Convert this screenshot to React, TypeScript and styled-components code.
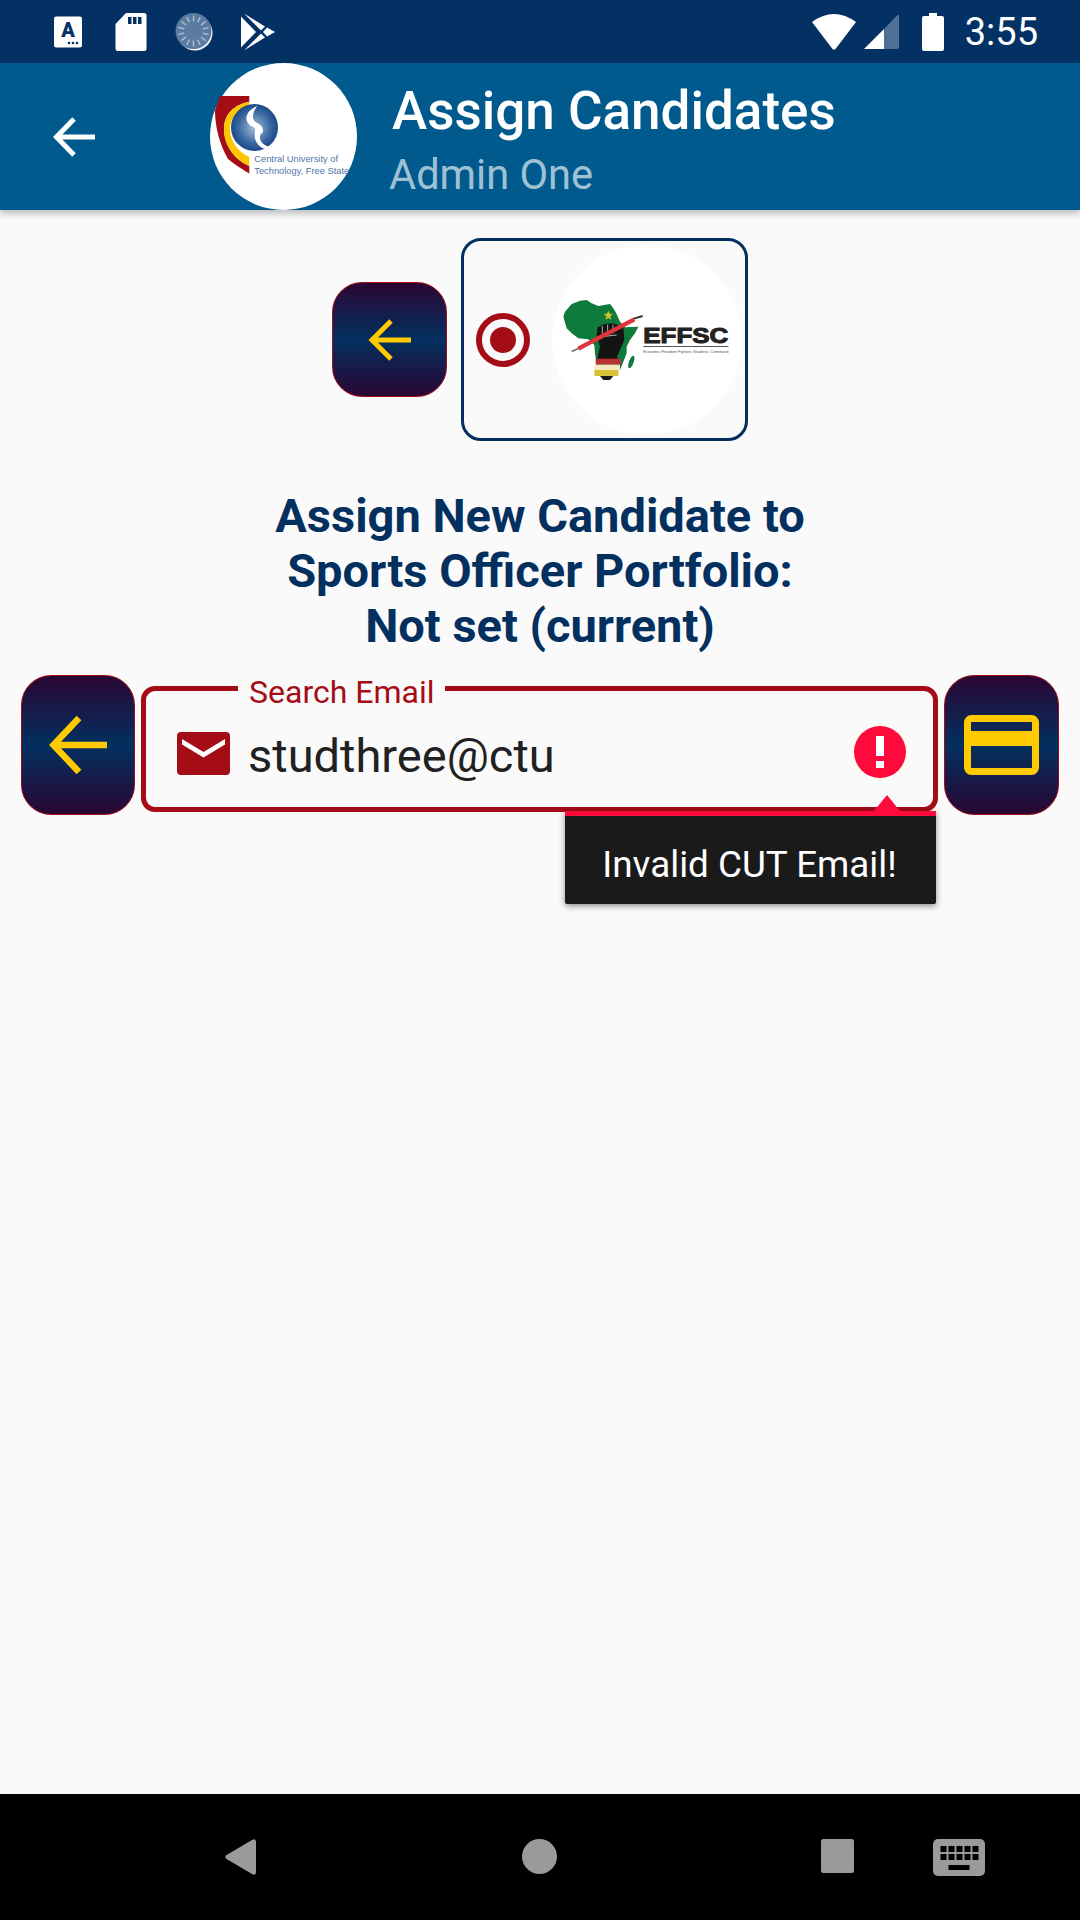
import React from "react";
import styled, { createGlobalStyle } from "styled-components";

const Global = createGlobalStyle`
  html, body { margin: 0; padding: 0; background: #fafafa; }
  body { font-family: Roboto, "Liberation Sans", sans-serif; }
`;

const Page = styled.div`
  width: 1080px;
  height: 1920px;
  display: flex;
  flex-direction: column;
  overflow: hidden;
  background: #fafafa;
`;

const StatusBar = styled.div`
  height: 63px;
  flex: none;
  box-sizing: border-box;
  background: #033163;
  display: flex;
  align-items: center;
  padding: 0 42px 0 49px;
  position: relative;
  z-index: 2;
`;
const StatusLeft = styled.div`
  display: flex;
  gap: 25px;
  flex: 1;
`;
const StatusRight = styled.div`
  display: flex;
  align-items: center;
`;
const StatusSlot = styled.svg<{ $ml?: number }>`
  display: block;
  flex: none;
  margin-left: ${(p) => p.$ml ?? 0}px;
`;
const Clock = styled.span`
  color: #fff;
  font-size: 38px;
  line-height: 38px;
  margin-left: 21px;
`;

const AppBar = styled.header`
  height: 147px;
  flex: none;
  background: #005a8d;
  display: flex;
  box-shadow: 0 3px 8px rgba(0, 0, 0, 0.28);
  position: relative;
  z-index: 1;
`;
const BackSlot = styled.div`
  width: 210px;
  flex: none;
  display: flex;
  align-items: center;
  padding-left: 53px;
  box-sizing: border-box;
`;
const Logo = styled.svg`
  width: 147px;
  height: 147px;
  flex: none;
  display: block;
`;
const TitleBlock = styled.div`
  margin-left: 35px;
  padding-top: 18px;
  display: flex;
  flex-direction: column;
`;
const Title = styled.div`
  color: #fff;
  font-size: 53px;
  line-height: 60px;
  font-weight: 500;
  white-space: nowrap;
`;
const Subtitle = styled.div`
  color: rgba(255, 255, 255, 0.65);
  font-size: 41.6px;
  line-height: 50px;
  margin: 9px 0 0 -3px;
  white-space: nowrap;
`;

const Content = styled.main`
  flex: 1;
  display: flex;
  flex-direction: column;
  padding-top: 28px;
`;
const PartyRow = styled.div`
  display: flex;
  justify-content: center;
  align-items: center;
  gap: 14px;
`;
const GradientButton = styled.div<{ $w: number; $h: number; $r: number }>`
  width: ${(p) => p.$w}px;
  height: ${(p) => p.$h}px;
  border-radius: ${(p) => p.$r}px;
  box-sizing: border-box;
  border: 1.5px solid #a50d16;
  background: linear-gradient(180deg, #2a0633 0%, #03305f 50%, #2a0633 100%);
  display: flex;
  align-items: center;
  justify-content: center;
  flex: none;
`;
const PartyCard = styled.div`
  width: 287px;
  height: 203px;
  box-sizing: border-box;
  border: 3px solid #03305f;
  border-radius: 20px;
  display: flex;
  align-items: center;
  padding-left: 12px;
`;
const Radio = styled.div`
  width: 54px;
  height: 54px;
  box-sizing: border-box;
  border: 6px solid #a50d16;
  border-radius: 50%;
  display: flex;
  align-items: center;
  justify-content: center;
  flex: none;
  &::after {
    content: "";
    width: 26px;
    height: 26px;
    border-radius: 50%;
    background: #a50d16;
  }
`;
const PartyLogo = styled.svg`
  width: 190px;
  height: 190px;
  margin-left: 22px;
  flex: none;
  display: block;
`;
const Heading = styled.h1`
  margin: 47px 0 0;
  text-align: center;
  color: #03305f;
  font-size: 47px;
  line-height: 55px;
  font-weight: 700;
`;
const SearchRow = styled.div`
  margin-top: 22px;
  padding: 0 21px;
  display: flex;
  gap: 6px;
  align-items: flex-start;
`;
const Field = styled.div`
  flex: 1;
  height: 126px;
  margin-top: 11px;
  box-sizing: border-box;
  border: 5px solid #a50d16;
  border-radius: 14px;
  position: relative;
  display: flex;
  align-items: center;
  padding: 6px 27px 0 31px;
`;
const FieldLabel = styled.span`
  position: absolute;
  left: 92px;
  top: -16px;
  padding: 0 11px;
  background: #fafafa;
  color: #a50d16;
  font-size: 32px;
  line-height: 34px;
`;
const MailIcon = styled.svg`
  flex: none;
  margin-top: 3px;
`;
const FieldValue = styled.span`
  flex: 1;
  margin: 7px 0 0 18px;
  color: #212121;
  font-size: 47px;
  line-height: 56px;
`;
const ErrorIcon = styled.svg`
  flex: none;
`;
const Tooltip = styled.div`
  position: absolute;
  left: 419px;
  top: 120px;
  width: 371px;
  height: 93px;
  box-sizing: border-box;
  border-top: 5px solid #ff0a3c;
  background: #1a1a1a;
  color: #fff;
  font-size: 36.8px;
  padding: 9px 2px 0 0;
  display: flex;
  align-items: center;
  justify-content: center;
  box-shadow: 0 2px 6px rgba(0, 0, 0, 0.45);
  border-radius: 0 0 2px 2px;
  &::before {
    content: "";
    position: absolute;
    left: 309px;
    top: -21px;
    border-left: 13px solid transparent;
    border-right: 13px solid transparent;
    border-bottom: 16px solid #ff0a3c;
  }
`;

const NavBar = styled.nav`
  height: 126px;
  flex: none;
  box-sizing: border-box;
  background: #000;
  display: flex;
  align-items: flex-start;
  padding: 45px 0 0 225px;
`;
const NavIcon = styled.svg<{ $ml?: number }>`
  display: block;
  flex: none;
  margin-left: ${(p) => p.$ml ?? 0}px;
`;

const ticks = Array.from({ length: 14 }, (_, i) => (i * 360) / 14);

const StatusIcons = () => (
  <StatusLeft>
    <StatusSlot width={38} height={38} viewBox="0 0 38 38">
      <rect x="5" y="3.5" width="28" height="31" rx="2" fill="#fff" />
      <text x="19" y="24" textAnchor="middle" fontFamily="Roboto" fontWeight="900" fontSize="20" fill="#033163">A</text>
      <circle cx="20" cy="30" r="1.3" fill="#033163" />
      <circle cx="24" cy="30" r="1.3" fill="#033163" />
      <circle cx="28" cy="30" r="1.3" fill="#033163" />
    </StatusSlot>
    <StatusSlot width={38} height={38} viewBox="0 0 38 38">
      <path d="M14 0H32a2.5 2.5 0 0 1 2.5 2.5V35.500a2.500 2.500 0 0 1-2.500 2.500H6a2.500 2.500 0 0 1-2.500-2.500V11Z" fill="#fff" />
      <rect x="16" y="4" width="3.500" height="7" fill="#033163" />
      <rect x="21" y="4" width="3.500" height="7" fill="#033163" />
      <rect x="26" y="4" width="3.500" height="7" fill="#033163" />
    </StatusSlot>
    <StatusSlot width={38} height={38} viewBox="0 0 38 38">
      <circle cx="20" cy="20" r="17.500" fill="#f2f5f8" />
      <circle cx="18.500" cy="18" r="18" fill="#5b7a9f" />
      {ticks.map((a) => (
        <rect key={a} x="17.800" y="2.500" width="1.500" height="6" fill="#a9bbcf" transform={`rotate(${a} 18.500 18)`} />
      ))}
    </StatusSlot>
    <StatusSlot width={38} height={38} viewBox="0 0 38 38">
      <g transform="translate(3 0.500)" fill="#fff">
        <path d="M0 3L15 18.500L0 34Z" />
        <path d="M3 0L24 13L20 17Z" />
        <path d="M3 37L24 24L20 20Z" />
        <path d="M26 14L34 18.500L26 23L22 18.500Z" />
      </g>
    </StatusSlot>
  </StatusLeft>
);

const StatusSystem = () => (
  <StatusRight>
    <StatusSlot width={44} height={36} viewBox="0 0 44 36">
      <path d="M0 8Q22-8 44 8L23.500 35Q22 36.500 20.500 35Z" fill="#fff" />
    </StatusSlot>
    <StatusSlot $ml={8} width={35} height={35} viewBox="0 0 35 35">
      <path d="M20 15L33.500 1Q35 0 35 2V33Q35 35 33 35H20Z" fill="#4f7095" />
      <path d="M0 35L20 15V35Z" fill="#fff" />
    </StatusSlot>
    <StatusSlot $ml={23} width={22} height={38} viewBox="0 0 22 38">
      <path d="M7 0H15V3H20Q22 3 22 5V36Q22 38 20 38H2Q0 38 0 36V5Q0 3 2 3H7Z" fill="#fff" />
    </StatusSlot>
    <Clock>3:55</Clock>
  </StatusRight>
);

const CutLogo = () => (
  <Logo viewBox="0 0 147 147">
    <defs>
      <radialGradient id="globe" cx="50%" cy="50%" r="55%">
        <stop offset="0%" stopColor="#a9bfd8" />
        <stop offset="60%" stopColor="#3b6aa3" />
        <stop offset="100%" stopColor="#123f7f" />
      </radialGradient>
    </defs>
    <circle cx="73.500" cy="73.500" r="73.500" fill="#fff" />
    <path d="M10 33H39.300V38.700C22 42 14 53 14 66C14 84 26 97 39.300 103V110.500C30 105 24 101 18 96C10 82 5 65 5 47Z" fill="#a50d16" />
    <path d="M39.300 38.700C22 42 14 53 14 66C14 84 26 97 39.300 103V94C28 89 20 78 20 66C20 55 28 46 39.300 43.500Z" fill="#fdc600" />
    <circle cx="44.500" cy="64.500" r="23.500" fill="url(#globe)" />
    <path d="M47 43C38 47 34 54 38 60C42 66 46 62 45 68C44 74 45 80 52 85C56 87 60 86 62 84C55 84 49 79 50 73C51 69 55 71 52 64C49 59 43 60 43 54C43 50 45 46 47 43Z" fill="#fff" />
    <text x="44.300" y="99" fontFamily="Liberation Sans" fontSize="9.300" fill="#4f76a5">Central University of</text>
    <text x="44.300" y="111" fontFamily="Liberation Sans" fontSize="9.300" fill="#4f76a5">Technology, Free State</text>
  </Logo>
);

const EffscLogo = () => (
  <PartyLogo viewBox="0 0 190 190">
    <circle cx="95" cy="95" r="95" fill="#fff" />
    <g transform="translate(3 45) scale(0.3333)">
      <path d="M25 80L30 65L50 42L75 32L95 30L110 40L130 48L165 42L175 55L185 72L195 95L210 112L250 110L240 130L225 150L215 170L215 190L205 215L195 240L150 250L125 225L120 190L118 165L100 148L70 145L50 130L35 115Z" fill="#0e7a3c" />
      <ellipse cx="229" cy="216" rx="7" ry="20" transform="rotate(20 229 216)" fill="#0e7a3c" />
      <path d="M160 62l4 9 10 1-8 7 3 10-9-5-9 5 3-10-8-7 10-1Z" fill="#d6c229" />
      <path d="M128 112L150 102L172 100L205 110L208 150L186 200L190 215L125 215L135 170L125 135Z" fill="#141414" />
      <path d="M142 108V135M158 104V132M174 104V130" stroke="#cfcfcf" strokeWidth="2.500" fill="none" />
      <path d="M140 140L185 135" stroke="#cfcfcf" strokeWidth="2.500" fill="none" />
      <path d="M70 176L238 88" stroke="#e2323c" strokeWidth="13" fill="none" />
      <path d="M50 184L70 176" stroke="#555" strokeWidth="4" fill="none" />
      <path d="M236 86L263 78" stroke="#333" strokeWidth="6" fill="none" />
      <path d="M122 206H198V224H122Z" fill="#b83232" />
      <path d="M118 224H195V240H118Z" fill="#f3e9bd" />
      <path d="M118 240H190V258H118Z" fill="#d7c23a" />
      <path d="M135 258H175L165 270H145Z" fill="#1a1a1a" />
      <text x="265" y="158" fontFamily="Liberation Sans" fontWeight="700" fontSize="64" fill="#222" stroke="#222" strokeWidth="3" textLength="255" lengthAdjust="spacingAndGlyphs">EFFSC</text>
      <rect x="265" y="168" width="255" height="2.500" fill="#333" />
      <text x="265" y="188" fontFamily="Liberation Sans" fontSize="11" fill="#555" textLength="255" lengthAdjust="spacingAndGlyphs">Economic Freedom Fighters Students' Command</text>
    </g>
  </PartyLogo>
);

export default function App() {
  return (
    <Page>
      <Global />
      <StatusBar>
        <StatusIcons />
        <StatusSystem />
      </StatusBar>
      <AppBar>
        <BackSlot>
          <svg width="42" height="40" viewBox="0 0 42 40">
            <path d="M42 20H3.500M21 2L3.500 20L21 38" fill="none" stroke="#fff" strokeWidth="5" />
          </svg>
        </BackSlot>
        <CutLogo />
        <TitleBlock>
          <Title>Assign Candidates</Title>
          <Subtitle>Admin One</Subtitle>
        </TitleBlock>
      </AppBar>
      <Content>
        <PartyRow>
          <GradientButton $w={115} $h={115} $r={30}>
            <svg width="44" height="42" viewBox="0 0 44 42">
              <path d="M43 21H4M23 2L4 21L23 40" fill="none" stroke="#ffcb00" strokeWidth="5" />
            </svg>
          </GradientButton>
          <PartyCard>
            <Radio />
            <EffscLogo />
          </PartyCard>
        </PartyRow>
        <Heading>
          Assign New Candidate to
          <br />
          Sports Officer Portfolio:
          <br />
          Not set (current)
        </Heading>
        <SearchRow>
          <GradientButton $w={114} $h={140} $r={30}>
            <svg width="60" height="60" viewBox="0 0 60 60">
              <path d="M59 30H5.500M31 3L5.500 30L31 57" fill="none" stroke="#ffcb00" strokeWidth="6.500" />
            </svg>
          </GradientButton>
          <Field>
            <FieldLabel>Search Email</FieldLabel>
            <MailIcon width="53" height="43" viewBox="0 0 53 43">
              <rect width="53" height="43" rx="4" fill="#a50d16" />
              <path d="M5 7L26.500 20L48 7V12.500L26.500 25.500L5 12.500Z" fill="#fff" />
            </MailIcon>
            <FieldValue>studthree@ctu</FieldValue>
            <ErrorIcon width="52" height="52" viewBox="0 0 52 52">
              <circle cx="26" cy="26" r="26" fill="#ff0a3c" />
              <rect x="22" y="10" width="8" height="20" fill="#fff" />
              <rect x="22" y="35" width="8" height="7" fill="#fff" />
            </ErrorIcon>
            <Tooltip>Invalid CUT Email!</Tooltip>
          </Field>
          <GradientButton $w={115} $h={140} $r={30}>
            <svg width="75" height="60" viewBox="0 0 75 60">
              <rect x="3.500" y="3.500" width="68" height="53" rx="4" fill="none" stroke="#ffcb00" strokeWidth="7" />
              <rect x="3" y="16" width="69" height="15" fill="#ffcb00" />
            </svg>
          </GradientButton>
        </SearchRow>
      </Content>
      <NavBar>
        <NavIcon width={31} height={36} viewBox="0 0 31 36">
          <path d="M1.500 16L27 1Q31-1 31 3V33Q31 37 27 35L1.500 20Q-1 18 1.500 16Z" fill="#9a9a9a" />
        </NavIcon>
        <NavIcon $ml={266} width={35} height={35} viewBox="0 0 35 35">
          <circle cx="17.500" cy="17.500" r="17.500" fill="#9a9a9a" />
        </NavIcon>
        <NavIcon $ml={264} width={33} height={34} viewBox="0 0 33 34">
          <rect width="33" height="34" rx="2.500" fill="#9a9a9a" />
        </NavIcon>
        <NavIcon $ml={79} width={52} height={37} viewBox="0 0 52 37">
          <rect width="52" height="37" rx="5" fill="#9a9a9a" />
          {[7.5, 15.5, 23.5, 31.5, 39.5].map((x) => (
            <React.Fragment key={x}>
              <rect x={x} y="7" width="6" height="6" fill="#000" />
              <rect x={x} y="15" width="6" height="6" fill="#000" />
            </React.Fragment>
          ))}
          <rect x="15.500" y="26" width="21" height="5" fill="#000" />
        </NavIcon>
      </NavBar>
    </Page>
  );
}
